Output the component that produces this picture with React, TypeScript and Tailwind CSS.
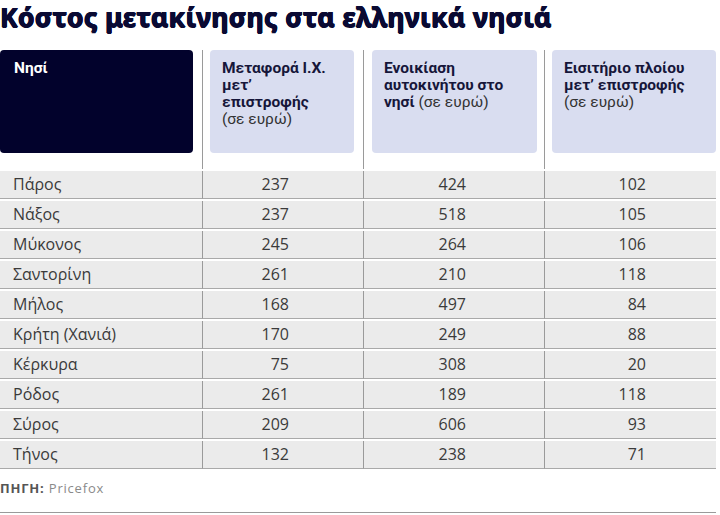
const rows: [string, number, number, number][] = [
  ["Πάρος", 237, 424, 102],
  ["Νάξος", 237, 518, 105],
  ["Μύκονος", 245, 264, 106],
  ["Σαντορίνη", 261, 210, 118],
  ["Μήλος", 168, 497, 84],
  ["Κρήτη (Χανιά)", 170, 249, 88],
  ["Κέρκυρα", 75, 308, 20],
  ["Ρόδος", 261, 189, 118],
  ["Σύρος", 209, 606, 93],
  ["Τήνος", 132, 238, 71],
]

export default function App() {
  return (
    <div className="w-[720px] h-[515px] bg-white overflow-hidden font-['Open_Sans',sans-serif]">
      <div className="h-[50px]">
        <h1 className="text-[26.5px] leading-[34px] tracking-[0.4px] font-bold text-[#0a0a33] font-['Noto_Sans',sans-serif] whitespace-nowrap [text-shadow:0.6px_0_0_#0a0a33,-0.6px_0_0_#0a0a33,0_0.5px_0_#0a0a33,0_-0.5px_0_#0a0a33]">
          Κόστος μετακίνησης στα ελληνικά νησιά
        </h1>
      </div>

      <div className="w-[716px] grid grid-cols-[202px_161px_181px_172px]">
        {/* header */}
        <div className="h-[119px] pr-[9px]">
          <div className="h-[103px] rounded-[4px] bg-[#02022c] px-[14px] pt-[10px] text-[15.5px] leading-[17px] font-bold text-white font-['Roboto',sans-serif]">
            Νησί
          </div>
        </div>
        <div className="h-[119px] border-l border-[#9a9a9a] pl-[7px] pr-[9px]">
          <div className="h-[103px] rounded-[4px] bg-[#d9ddf0] px-[12px] pt-[10px] text-[15.5px] leading-[17px] font-bold text-[#16163a] font-['Roboto',sans-serif]">
            Μεταφορά Ι.Χ.
            <br />
            μετ’
            <br />
            επιστροφής
            <br />
            <span className="font-normal text-[#333]">(σε ευρώ)</span>
          </div>
        </div>
        <div className="h-[119px] border-l border-[#9a9a9a] pl-[8px] pr-[7px]">
          <div className="h-[103px] rounded-[4px] bg-[#d9ddf0] px-[12px] pt-[10px] text-[15.5px] leading-[17px] font-bold text-[#16163a] font-['Roboto',sans-serif]">
            Ενοικίαση
            <br />
            αυτοκινήτου στο
            <br />
            νησί <span className="font-normal text-[#333]">(σε ευρώ)</span>
          </div>
        </div>
        <div className="h-[119px] border-l border-[#9a9a9a] pl-[7px]">
          <div className="h-[103px] rounded-[4px] bg-[#d9ddf0] px-[12px] pt-[10px] text-[15.5px] leading-[17px] font-bold text-[#16163a] font-['Roboto',sans-serif]">
            Εισιτήριο πλοίου
            <br />
            μετ’ επιστροφής
            <br />
            <span className="font-normal text-[#333]">(σε ευρώ)</span>
          </div>
        </div>

        {/* rows */}
        {rows.map(([name, a, b, c]) => (
          <div key={name} className="contents">
            <div className="h-[30px] border-t-2 border-white">
              <div className="h-full bg-[#ebebeb] border-b border-[#a9a9a9] pl-[13px] text-[16px] leading-[27px] text-[#3a3a3a]">
                {name}
              </div>
            </div>
            <div className="h-[30px] border-t-2 border-white">
              <div className="h-full bg-[#ebebeb] border-b border-[#a9a9a9] border-l border-l-[#9a9a9a] pr-[74px] text-right text-[16px] leading-[27px] text-[#3a3a3a]">
                {a}
              </div>
            </div>
            <div className="h-[30px] border-t-2 border-white">
              <div className="h-full bg-[#ebebeb] border-b border-[#a9a9a9] border-l border-l-[#9a9a9a] pr-[78px] text-right text-[16px] leading-[27px] text-[#3a3a3a]">
                {b}
              </div>
            </div>
            <div className="h-[30px] border-t-2 border-white">
              <div className="h-full bg-[#ebebeb] border-b border-[#a9a9a9] border-l border-l-[#9a9a9a] pr-[70px] text-right text-[16px] leading-[27px] text-[#3a3a3a]">
                {c}
              </div>
            </div>
          </div>
        ))}
      </div>

      <p className="mt-[11px] text-[13px] leading-[16px] tracking-[0.8px] text-[#8a8a8a]">
        <span className="font-bold text-[#555]">ΠΗΓΗ:</span> Pricefox
      </p>
      <div className="mt-[16px] w-[716px] border-t border-[#9a9a9a]" />
    </div>
  )
}
